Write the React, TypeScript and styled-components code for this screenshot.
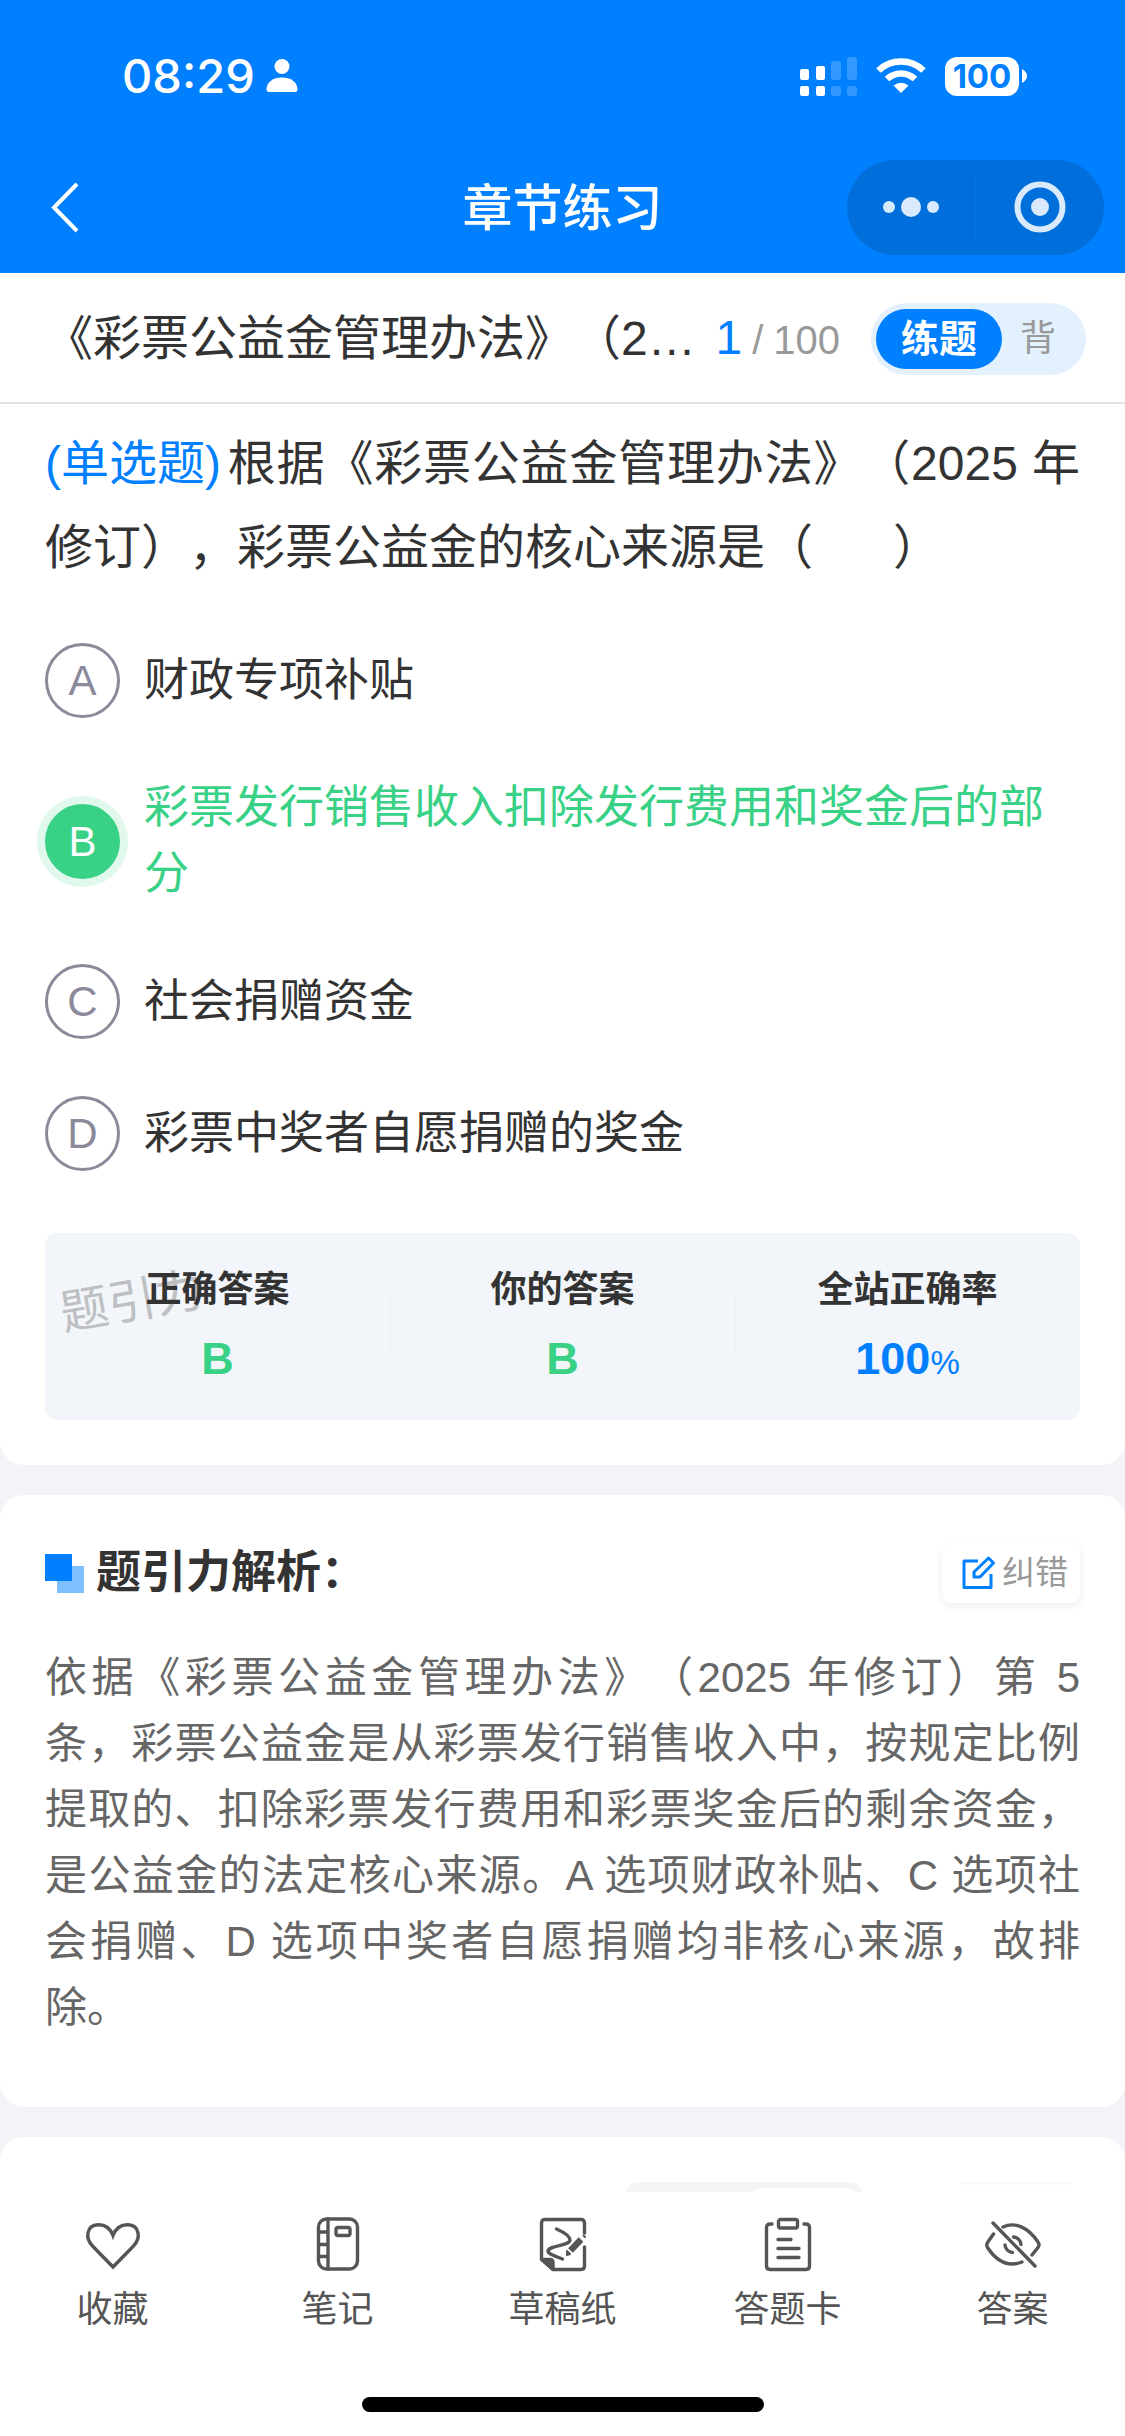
import React from "react";
import styled, { createGlobalStyle } from "styled-components";

const GlobalStyle = createGlobalStyle`
  *, *::before, *::after { box-sizing: border-box; }
  html, body, #root { height: 100%; }
  body {
    margin: 0;
    background: #f2f4f8;
    color: #333;
    font-family: "Liberation Sans", "Noto Sans CJK SC", sans-serif;
    text-spacing-trim: space-all;
  }
  h1, h2, p, ul, dl, dd { margin: 0; padding: 0; border: 0; }
  ul { list-style: none; }
  button { margin: 0; padding: 0; border: 0; background: none; color: inherit; font: inherit; cursor: pointer; }
`;

const Page = styled.div`
  display: flex;
  flex-direction: column;
  height: 100%;
`;

const Header = styled.header`
  flex: none;
  background: #0080ff;
  color: #fff;
`;

const StatusBar = styled.div`
  display: flex;
  align-items: center;
  justify-content: space-between;
  height: 152px;
  padding: 0 98px 0 122px;
`;

const StatusGroup = styled.div<{ $gap: number }>`
  display: flex;
  align-items: center;
  gap: ${(p) => p.$gap}px;
`;

const Clock = styled.time`
  font: 500 47px/56px Inter, sans-serif;
`;

const Battery = styled.div`
  display: flex;
  align-items: center;
  gap: 3px;
`;

const BatteryLevel = styled.span`
  width: 74px;
  height: 39px;
  border-radius: 12px;
  background: #fff;
  color: #0080ff;
  font: 700 33px/39px Inter, sans-serif;
  text-align: center;
`;

const NavBar = styled.div`
  display: grid;
  grid-template-columns: 1fr auto 1fr;
  align-items: center;
  height: 121px;
  padding: 0 21px 11px;
`;

const BackButton = styled.button`
  display: flex;
  justify-self: start;
  padding-left: 24px;
`;

const NavTitle = styled.h1`
  padding-top: 4px;
  font-size: 50px;
  font-weight: 500;
  line-height: 72px;
`;

const Capsule = styled.div`
  display: flex;
  align-items: center;
  justify-self: end;
  width: 257px;
  height: 95px;
  border-radius: 48px;
  background: #006fdb;
`;

const CapsuleButton = styled.button`
  display: flex;
  flex: 1;
  align-items: center;
  justify-content: center;
  height: 63px;

  & + & {
    border-left: 1px solid #0077e6;
  }
`;

const PaperBar = styled.div`
  display: flex;
  flex: none;
  align-items: center;
  height: 131px;
  padding: 3px 39px 0 45px;
  border-bottom: 2px solid #e2e3e5;
  background: #fff;
`;

const PaperTitle = styled.h2`
  flex: 1;
  min-width: 0;
  overflow: hidden;
  font-size: 48px;
  font-weight: 400;
  line-height: 72px;
  text-overflow: ellipsis;
  white-space: nowrap;
`;

const Progress = styled.p`
  display: flex;
  align-items: baseline;
  gap: 10px;
  margin: 0 31px 0 15px;
  color: #999;
  font-size: 40px;
  line-height: 72px;
`;

const Current = styled.span`
  color: #0080ff;
  font-size: 48px;
`;

const ModeSwitch = styled.div`
  display: flex;
  align-items: center;
  width: 215px;
  height: 72px;
  padding: 6px 12px 6px 5px;
  border-radius: 36px;
  background: #e3f0fe;
`;

const ModeButton = styled.button<{ $active?: boolean }>`
  flex: ${(p) => (p.$active ? "0 0 126px" : "1")};
  height: 60px;
  border-radius: 30px;
  background: ${(p) => (p.$active ? "#0080ff" : "transparent")};
  color: ${(p) => (p.$active ? "#fff" : "#999")};
  font-size: ${(p) => (p.$active ? 38 : 36)}px;
  font-weight: ${(p) => (p.$active ? 700 : 400)};
  line-height: 60px;
`;

const Content = styled.main`
  display: flex;
  flex: 1;
  flex-direction: column;
  gap: 30px;
  min-height: 0;
  overflow: hidden;
`;

const Card = styled.section`
  flex: none;
  padding: 45px;
  border-radius: 24px;
  background: #fff;
`;

const QuestionCard = styled(Card)`
  padding-top: 18px;
  border-radius: 0 0 24px 24px;
`;

const ExplainCard = styled(Card)`
  padding-bottom: 66px;
`;

const Question = styled.p`
  margin-bottom: 53px;
  font-size: 48px;
  line-height: 84px;
  text-align: justify;
`;

const Kind = styled.span`
  display: inline-block;
  margin-right: 6px;
  color: #0080ff;
`;

const Options = styled.ul`
  display: flex;
  flex-direction: column;
  gap: 57px;
  margin-bottom: 62px;
`;

const Option = styled.button<{ $correct?: boolean }>`
  display: flex;
  align-items: center;
  gap: 24px;
  width: 100%;
  color: ${(p) => (p.$correct ? "#38d186" : "#333")};
  font-size: 45px;
  line-height: 66px;
  text-align: left;
`;

const Letter = styled.span<{ $correct?: boolean }>`
  flex: none;
  width: 75px;
  height: 75px;
  border: 3px solid ${(p) => (p.$correct ? "#38d186" : "#8b899a")};
  border-radius: 50%;
  background: ${(p) => (p.$correct ? "#38d186" : "transparent")};
  box-shadow: ${(p) => (p.$correct ? "0 0 0 8px #e1f8ec" : "none")};
  color: ${(p) => (p.$correct ? "#fff" : "#8b899a")};
  font-size: 42px;
  line-height: 69px;
  text-align: center;
`;

const Result = styled.dl`
  position: relative;
  display: grid;
  grid-template-columns: repeat(3, 1fr);
  padding: 27px 0 28px;
  border-radius: 12px;
  background: #f2f5f9;
`;

const Watermark = styled.span`
  position: absolute;
  top: 36px;
  left: 15px;
  color: #bdbfc2;
  font-size: 48px;
  line-height: 66px;
  transform: rotate(-10deg);
`;

const ResultItem = styled.div`
  position: relative;
  display: flex;
  flex-direction: column;
  gap: 6px;
  align-items: center;

  & + &::before {
    position: absolute;
    top: 36px;
    left: 0;
    width: 1px;
    height: 54px;
    background: #ebeef2;
    content: "";
  }
`;

const ResultLabel = styled.dt`
  font-size: 36px;
  font-weight: 700;
  line-height: 60px;
`;

const ResultValue = styled.dd<{ $blue?: boolean }>`
  color: ${(p) => (p.$blue ? "#0080ff" : "#38d186")};
  font-size: 45px;
  font-weight: 700;
  line-height: 66px;
`;

const Percent = styled.span`
  font-size: 33px;
  font-weight: 400;
  line-height: 33px;
`;

const ExplainHead = styled.div`
  display: flex;
  align-items: center;
  gap: 12px;
  margin-bottom: 39px;
`;

const Mark = styled.span`
  display: grid;
  width: 39px;
  height: 39px;

  &::before, &::after {
    grid-area: 1 / 1;
    width: 27px;
    height: 27px;
    background: #0080ff;
    content: "";
  }
  &::before { z-index: 1; }
  &::after { place-self: end; background: #80bfff; }
`;

const ExplainTitle = styled.h2`
  flex: 1;
  font-size: 45px;
  font-weight: 700;
  line-height: 66px;
`;

const FixButton = styled.button`
  display: flex;
  align-items: center;
  gap: 6px;
  height: 60px;
  padding: 0 12px 0 18px;
  border-radius: 9px;
  background: #fff;
  box-shadow: 0 3px 9px rgba(0, 0, 0, 0.07);
  color: #999;
  font-size: 33px;
  line-height: 60px;
`;

const Explain = styled.p`
  color: #666;
  font-size: 42px;
  line-height: 66px;
  text-align: justify;
`;

const Keep = styled.span`
  white-space: nowrap;
`;

const NotesHead = styled.div`
  display: flex;
  align-items: flex-start;
  justify-content: flex-end;
  gap: 96px;
  padding-right: 9px;
`;

const SortTabs = styled.div`
  display: flex;
  width: 240px;
  height: 66px;
  padding: 6px;
  border-radius: 15px;
  background: #f5f5f5;
`;

const SortTab = styled.span`
  width: 108px;
  margin-left: auto;
  border-radius: 12px;
  background: #fff;
`;

const NotesLine = styled.span`
  width: 111px;
  height: 3px;
  background: #fafafa;
`;

const BottomBar = styled.footer`
  flex: none;
  height: 244px;
  padding-top: 22px;
  background: #fff;
`;

const Tools = styled.nav`
  display: grid;
  grid-template-columns: repeat(5, 1fr);
  margin-bottom: 57px;
`;

const Tool = styled.button`
  display: flex;
  flex-direction: column;
  gap: 6px;
  align-items: center;
  color: #555;
  font-size: 36px;
  line-height: 60px;
`;

const HomeBar = styled.div`
  width: 402px;
  height: 15px;
  margin: 0 auto;
  border-radius: 8px;
  background: #000;
`;

const OPTIONS = [
  { letter: "A", text: "财政专项补贴" },
  { letter: "B", text: "彩票发行销售收入扣除发行费用和奖金后的部分", correct: true },
  { letter: "C", text: "社会捐赠资金" },
  { letter: "D", text: "彩票中奖者自愿捐赠的奖金" },
];

const stroke = {
  fill: "none",
  stroke: "currentColor",
  strokeWidth: 3.4,
  strokeLinecap: "round" as const,
  strokeLinejoin: "round" as const,
};

const HeartIcon = () => (
  <svg width="60" height="60" viewBox="0 0 60 60" {...stroke} strokeLinejoin="miter">
    <path d="M30 53 L10 32.500 C1.500 24 3.500 11.500 15 10.800 C23 10.500 27.500 15 30 21.500 C32.500 15 37 10.500 45 10.800 C56.500 11.500 58.500 24 50 32.500 Z" />
  </svg>
);

const NotebookIcon = () => (
  <svg width="60" height="60" viewBox="0 0 60 60" {...stroke}>
    <rect x="10.500" y="5" width="39" height="50" rx="8" />
    <path d="M20 5V55M10.500 18H20M10.500 30.500H20M10.500 42.500H20" />
    <rect x="28" y="13.500" width="14" height="8" rx="2" />
  </svg>
);

const DraftIcon = () => (
  <svg width="60" height="60" viewBox="0 0 60 60" {...stroke}>
    <path d="M51.500 19V9Q51.500 5.500 48 5.500H12Q8.500 5.500 8.500 9V45L20 55.500H48Q51.500 55.500 51.500 52V33" />
    <path d="M8.500 45.500H17Q20 45.500 20 48.500V55.500Z" fill="currentColor" />
    <path d="M23.500 15C28 17 37 21 37 26C37 32 16 31 15 37C15 40.500 24 42.500 29.500 45" />
    <path d="M37.500 36.500L48 25.500" strokeWidth="6.500" strokeLinecap="butt" />
    <path d="M34 41V37L37 40ZM50.500 21.500L52 23" strokeWidth="2" fill="currentColor" />
  </svg>
);

const ClipboardIcon = () => (
  <svg width="60" height="60" viewBox="0 0 60 60" {...stroke}>
    <path d="M14 10H12Q8.500 10 8.500 13.500V52Q8.500 55.500 12 55.500H48Q51.500 55.500 51.500 52V13.500Q51.500 10 48 10H46" />
    <rect x="20.500" y="5.500" width="19" height="8.500" rx="2" />
    <path d="M20 25.500H33M20 34.500H41M20 43.500H41" />
  </svg>
);

const EyeOffIcon = () => (
  <svg width="60" height="60" viewBox="0 0 60 60" {...stroke}>
    <path d="M10 9L52 52" />
    <path d="M20 13C32 7.500 45 13 55 28Q57 30.500 55 33.500L49 41" />
    <path d="M10.500 20L4.500 28.500Q3 31 4.500 33.500C14 48 26 53 39 48" />
    <path d="M30.500 23A8 8 0 0 1 38 30.500M22 31A8 8 0 0 0 29.500 38.500" />
  </svg>
);

const TOOLS = [
  { label: "收藏", Icon: HeartIcon },
  { label: "笔记", Icon: NotebookIcon },
  { label: "草稿纸", Icon: DraftIcon },
  { label: "答题卡", Icon: ClipboardIcon },
  { label: "答案", Icon: EyeOffIcon },
];

export default function App() {
  return (
    <Page>
      <GlobalStyle />
      <Header>
        <StatusBar>
          <StatusGroup $gap={11}>
            <Clock>08:29</Clock>
            <svg width="32" height="36" viewBox="0 0 32 36" fill="#fff">
              <circle cx="16" cy="8.500" r="7.500" />
              <path d="M0.500 31C1 24 7 19.500 16 19.500S31 24 31.500 31Q31.500 34 29 34H3Q0.500 34 0.500 31Z" />
            </svg>
          </StatusGroup>
          <StatusGroup $gap={19}>
            <svg width="57" height="39" viewBox="0 0 57 39" fill="#fff">
              <rect x="0" y="12" width="9" height="11" rx="2" />
              <rect x="16" y="9" width="9" height="14" rx="2" />
              <rect x="0" y="29" width="9" height="10" rx="2" />
              <rect x="16" y="29" width="9" height="10" rx="2" />
              <g opacity="0.2">
                <rect x="31" y="4" width="10" height="19" rx="3" />
                <rect x="47" y="0" width="10" height="23" rx="3" />
                <rect x="31" y="29" width="10" height="10" rx="3" />
                <rect x="47" y="29" width="10" height="10" rx="3" />
              </g>
            </svg>
            <svg width="50" height="36" viewBox="0 0 50 36" fill="none" stroke="#fff" strokeWidth="6.500">
              <path d="M2.500 12.500C15 0.500 35 0.500 47.500 12.500" />
              <path d="M11 21C19 13.500 31 13.500 39 21" />
              <path d="M17.500 27.500Q25 22 32.500 27.500L25 35Z" fill="#fff" stroke="none" />
            </svg>
            <Battery>
              <BatteryLevel>100</BatteryLevel>
              <svg width="5" height="14" viewBox="0 0 5 14" fill="#fff">
                <path d="M0 0Q5 3 5 7T0 14Z" />
              </svg>
            </Battery>
          </StatusGroup>
        </StatusBar>
        <NavBar>
          <BackButton aria-label="返回">
            <svg width="40" height="56" viewBox="0 0 40 56" fill="none" stroke="#fff" strokeWidth="4">
              <path d="M32 5L9 28.500L32 52" />
            </svg>
          </BackButton>
          <NavTitle>章节练习</NavTitle>
          <Capsule>
            <CapsuleButton aria-label="更多">
              <svg width="56" height="20" viewBox="0 0 56 20" fill="#d9eafc">
                <circle cx="6" cy="10" r="6" />
                <circle cx="28" cy="10" r="10" />
                <circle cx="50" cy="10" r="6" />
              </svg>
            </CapsuleButton>
            <CapsuleButton aria-label="关闭">
              <svg width="52" height="52" viewBox="0 0 52 52">
                <circle cx="26" cy="26" r="22.500" fill="none" stroke="#d9eafc" strokeWidth="6" />
                <circle cx="26" cy="26" r="9" fill="#d9eafc" />
              </svg>
            </CapsuleButton>
          </Capsule>
        </NavBar>
      </Header>

      <PaperBar>
        <PaperTitle>《彩票公益金管理办法》（2025 年修订）</PaperTitle>
        <Progress>
          <Current>1</Current>
          <span>/</span>
          <span>100</span>
        </Progress>
        <ModeSwitch>
          <ModeButton $active>练题</ModeButton>
          <ModeButton>背</ModeButton>
        </ModeSwitch>
      </PaperBar>

      <Content>
        <QuestionCard>
          <Question>
            <Kind>(单选题)</Kind>
            根据《彩票公益金管理办法》（2025 年修订），彩票公益金的核心来源是（{"\u00a0".repeat(6)}）
          </Question>
          <Options>
            {OPTIONS.map((o) => (
              <li key={o.letter}>
                <Option $correct={o.correct}>
                  <Letter $correct={o.correct}>{o.letter}</Letter>
                  <span>{o.text}</span>
                </Option>
              </li>
            ))}
          </Options>
          <Result>
            <Watermark aria-hidden="true">题引力</Watermark>
            <ResultItem>
              <ResultLabel>正确答案</ResultLabel>
              <ResultValue>B</ResultValue>
            </ResultItem>
            <ResultItem>
              <ResultLabel>你的答案</ResultLabel>
              <ResultValue>B</ResultValue>
            </ResultItem>
            <ResultItem>
              <ResultLabel>全站正确率</ResultLabel>
              <ResultValue $blue>
                100<Percent>%</Percent>
              </ResultValue>
            </ResultItem>
          </Result>
        </QuestionCard>

        <ExplainCard>
          <ExplainHead>
            <Mark />
            <ExplainTitle>题引力解析：</ExplainTitle>
            <FixButton>
              <svg width="36" height="36" viewBox="0 0 36 36" fill="none" stroke="#0080ff" strokeWidth="3" strokeLinejoin="round">
                <path d="M18 6H4V32.500H31V19" />
                <path d="M28.500 3L33.500 8L20 22H14V17Z" />
              </svg>
              纠错
            </FixButton>
          </ExplainHead>
          <Explain>
            依据《彩票公益金管理办法》（2025 年修订）第 5 <Keep>条，彩票</Keep>
            公益金是从彩票发行销售收入中，按规定比例提取的、扣除彩票发行费用和彩票奖金后的剩余资金，是公益金的法定核心来源。A
            选项财政补贴、C 选项社会捐赠、D 选项中奖者自愿捐赠均非核心来源，故排除。
          </Explain>
        </ExplainCard>

        <Card>
          <NotesHead>
            <SortTabs>
              <SortTab />
            </SortTabs>
            <NotesLine />
          </NotesHead>
        </Card>
      </Content>

      <BottomBar>
        <Tools>
          {TOOLS.map(({ label, Icon }) => (
            <Tool key={label}>
              <Icon />
              <span>{label}</span>
            </Tool>
          ))}
        </Tools>
        <HomeBar />
      </BottomBar>
    </Page>
  );
}
